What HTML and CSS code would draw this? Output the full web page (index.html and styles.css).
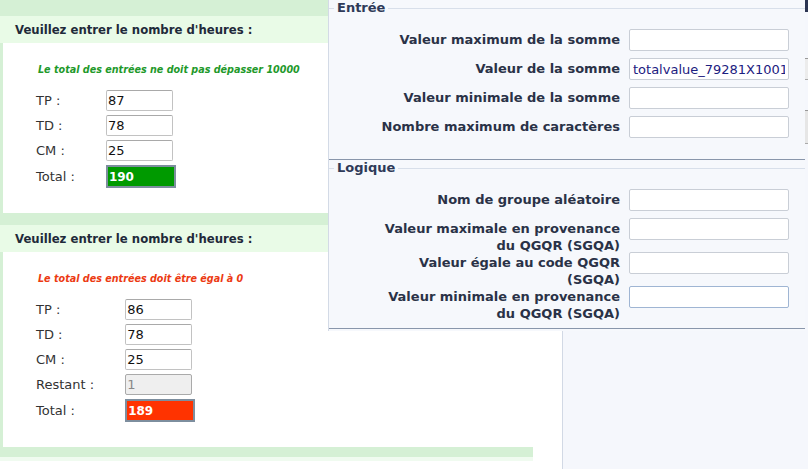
FILE: index.html
```html
<!DOCTYPE HTML>
<html>
  <head>
    <meta charset="utf-8">
    <link rel="stylesheet" href="styles.css">
  </head>
  <body>
    <div class="page">
      <div class="main">

        <div class="question first">
          <div class="q_head">Veuillez entrer le nombre d'heures :</div>
          <div class="q_body">
            <p class="tip ok">Le total des entrées ne doit pas dépasser 10000</p>
            <div class="fields">
              <label>TP :</label>
              <input class="num" value="87">
              <label>TD :</label>
              <input class="num" value="78">
              <label>CM :</label>
              <input class="num" value="25">
              <label>Total :</label>
              <input class="num total good" value="190">
            </div>
          </div>
        </div>

        <div class="question">
          <div class="q_head">Veuillez entrer le nombre d'heures :</div>
          <div class="q_body">
            <p class="tip bad">Le total des entrées doit être égal à 0</p>
            <div class="fields">
              <label>TP :</label>
              <input class="num" value="86">
              <label>TD :</label>
              <input class="num" value="78">
              <label>CM :</label>
              <input class="num" value="25">
              <label>Restant :</label>
              <input class="num left" value="1" disabled>
              <label>Total :</label>
              <input class="num total wrong" value="189">
            </div>
          </div>
        </div>
        <div class="q_foot"></div>

      </div>

      <div class="side">
        <div class="side_bar"></div>
        <div class="side_box"></div>
        <div class="side_box low"></div>
      </div>

      <div class="settings">
        <fieldset class="group">
          <legend>Entrée</legend>
          <div class="setting">
            <label>Valeur maximum de la somme</label>
            <input>
          </div>
          <div class="setting">
            <label>Valeur de la somme</label>
            <input value="totalvalue_79281X10017">
          </div>
          <div class="setting">
            <label>Valeur minimale de la somme</label>
            <input>
          </div>
          <div class="setting">
            <label>Nombre maximum de caractères</label>
            <input>
          </div>
        </fieldset>

        <fieldset class="group logic">
          <legend>Logique</legend>
          <div class="setting">
            <label>Nom de groupe aléatoire</label>
            <input>
          </div>
          <div class="setting">
            <label>Valeur maximale en provenance du QGQR (SGQA)</label>
            <input>
          </div>
          <div class="setting">
            <label>Valeur égale au code QGQR (SGQA)</label>
            <input>
          </div>
          <div class="setting">
            <label>Valeur minimale en provenance du QGQR (SGQA)</label>
            <input class="focus">
          </div>
        </fieldset>
      </div>
    </div>
  </body>
</html>
```

FILE: styles.css
```css
* {
  box-sizing: border-box;
}

body {
  margin: 0;
  background-color: #fff;
  font-family: "DejaVu Sans", Verdana, sans-serif;
  font-size: 13px;
  color: #333;
}

.page {
  position: relative;
  display: flex;
  height: 469px;
  overflow: hidden;
}

.main {
  width: 562px;
  flex: none;
}

/* question boxes */
.question {
  width: 533px;
  border-top: 12px solid #d5f0d5;
}

.question.first {
  border-top-width: 16px;
}

.q_head {
  height: 27px;
  line-height: 28px;
  padding-left: 15px;
  background-color: #e9fbe7;
  font-size: 11.7px;
  font-weight: bold;
  color: #1f2a3a;
}

.q_body {
  border-left: 3px solid #d5f0d5;
  padding: 20px 0 25px 33px;
}

.q_foot {
  width: 533px;
  height: 14px;
  background-color: #d5f0d5;
  border-bottom: 4px solid #f0fbf0;
}

.tip {
  margin: 0 0 13px 2px;
  font-size: 9.6px;
  line-height: 14px;
  font-weight: bold;
  font-style: italic;
}

.tip.ok {
  color: #22992a;
}

.tip.bad {
  color: #ec3a12;
}

.fields {
  display: grid;
  grid-template-columns: max-content max-content;
  column-gap: 31px;
  row-gap: 4px;
  align-items: center;
}

.fields label {
  color: #333;
}

.num {
  width: 67px;
  height: 21px;
  padding: 0 1px;
  border: 1px solid #c2c2c2;
  border-top-color: #a9a9a9;
  border-radius: 2px;
  font-family: "DejaVu Sans", Verdana, sans-serif;
  font-size: 13px;
  color: #111;
  background-color: #fff;
}

.num.left {
  background-color: #efefef;
  border-color: #aaa;
  color: #888;
}

.num.total {
  width: 70px;
  height: 23px;
  border: 2px solid #7d8e9e;
  border-radius: 0;
  font-size: 12px;
  font-weight: bold;
  color: #fff;
}

.num.good {
  background-color: #009a00;
}

.num.wrong {
  background-color: #ff3300;
}

/* right column behind the settings window */
.side {
  flex: 1;
  background-color: #f5f7fc;
  border-left: 1px solid #d2d9e5;
}

.side_bar {
  height: 12px;
  background-color: #2b3452;
}

.side_box {
  height: 22px;
  margin-top: 46px;
  background-color: #ececec;
  border-top: 1px solid #999;
  border-bottom: 1px solid #aaa;
}

.side_box.low {
  height: 34px;
  margin-top: 30px;
  background-color: #e6e6e6;
}

/* settings window */
.settings {
  position: absolute;
  top: 0;
  left: 328px;
  width: 477px;
  height: 331px;
  background-color: #f6f8fc;
  border-left: 1px solid #d3dae6;
}

.group {
  margin: 0;
  border: none;
  border-top: 1px solid #d8dfea;
  border-bottom: 1px solid #8996ab;
  padding: 13px 0 14px 5px;
}

.group.logic {
  padding-bottom: 8px;
}

.group legend {
  padding: 0 3px;
  font-size: 13px;
  line-height: 16px;
  font-weight: bold;
  color: #2e3a58;
}

.setting {
  display: flex;
  align-items: flex-start;
  min-height: 29px;
  padding-left: 36px;
}

.setting label {
  width: 250px;
  padding-top: 2px;
  margin-bottom: -2px;
  text-align: right;
  line-height: 17px;
  font-weight: bold;
  color: #2a3247;
}

.setting input {
  width: 160px;
  height: 22px;
  margin-left: 9px;
  padding: 0 3px;
  border: 1px solid #c9ced6;
  border-radius: 2px;
  background-color: #fff;
  font-family: "DejaVu Sans", Verdana, sans-serif;
  font-size: 13px;
  color: #1c2080;
}

.setting input.focus {
  border-color: #9fb5d3;
}
```
